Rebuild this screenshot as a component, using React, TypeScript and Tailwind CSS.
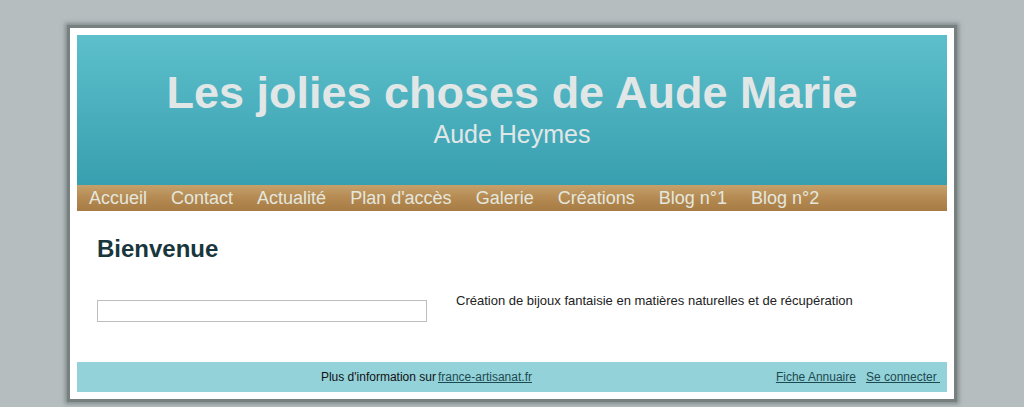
export default function App() {
  const menu = ["Accueil", "Contact", "Actualité", "Plan d'accès", "Galerie", "Créations", "Blog n°1", "Blog n°2"];

  return (
    <div className="min-h-screen bg-[#b5bdbf] pt-[25px] font-['Liberation_Sans',Arial,sans-serif]">
      {/* Frame */}
      <div className="mx-auto w-[890px] border-[3px] border-[#76807f] bg-white p-[7px] shadow-[0_0_4px_2px_rgba(90,100,100,0.55)]">
        {/* Header */}
        <header className="flex h-[150px] flex-col items-center bg-gradient-to-b from-[#5dbfcb] to-[#379faf] pt-[32px] text-[#e1e7e7]">
          <h1 className="text-[45px] font-bold leading-[52px]">Les jolies choses de Aude Marie</h1>
          <p className="text-[25px] leading-[30px]">Aude Heymes</p>
        </header>

        {/* Menu */}
        <nav className="flex h-[26px] bg-gradient-to-b from-[#c6a06b] via-[#b48a52] to-[#a77c44] px-[12px]">
          {menu.map((item) => (
            <a key={item} className="mr-[24px] text-[18px] leading-[26px] text-[#e4e7de]">
              {item}
            </a>
          ))}
        </nav>

        {/* Content */}
        <main className="px-[20px] pt-[24px] pb-[40px]">
          <h2 className="text-[24px] font-bold leading-[28px] text-[#19363d]">Bienvenue</h2>
          <div className="mt-[29px] flex">
            <div className="w-[330px] pt-[8px]">
              <div className="h-[22px] border border-[#bdbdbd] bg-white" />
            </div>
            <p className="ml-[29px] text-[13px] leading-[18px] text-[#222]">
              Création de bijoux fantaisie en matières naturelles et de récupération
            </p>
          </div>
        </main>

        {/* Footer */}
        <footer className="flex h-[30px] items-center bg-[#94d2da] pr-[7px] text-[12px] leading-[30px] text-[#111]">
          <div className="flex-1 text-center">
            Plus d'information sur
            <a className="ml-[2px] text-[#1d4a50] underline">france-artisanat.fr</a>
          </div>
          <div className="flex gap-[10px] text-[#1d4a50]">
            <a className="underline">Fiche Annuaire</a>
            <a className="underline whitespace-pre">Se connecter </a>
          </div>
        </footer>
      </div>
    </div>
  );
}
